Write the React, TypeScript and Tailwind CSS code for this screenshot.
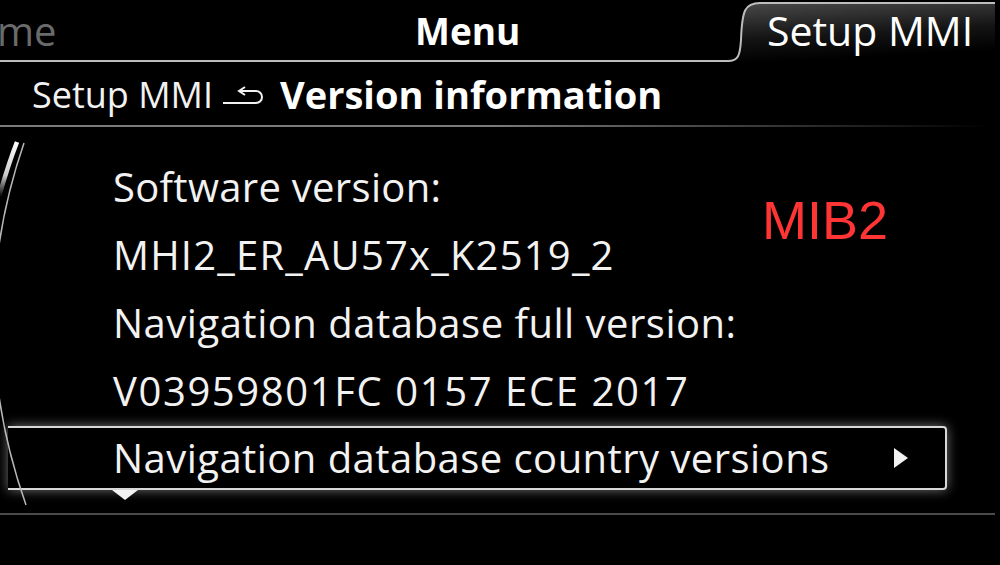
import React from 'react';

const rows = [
  { text: 'Software version:', track: 'tracking-[0.3px]' },
  { text: 'MHI2_ER_AU57x_K2519_2', track: 'tracking-[1.2px]' },
  { text: 'Navigation database full version:', track: 'tracking-[0.5px]' },
  { text: 'V03959801FC 0157 ECE 2017', track: 'tracking-[1.6px]' },
];

const font = { fontFamily: '"Open Sans", "Noto Sans", sans-serif' };

const TabOutline = () => (
  <svg className="absolute inset-0 h-full w-full" viewBox="0 0 1000 62" preserveAspectRatio="none">
    <defs>
      <linearGradient id="tabFill" x1="0" y1="0" x2="0.25" y2="1">
        <stop offset="0" stopColor="#4a4a4a" />
        <stop offset="0.6" stopColor="#141414" />
        <stop offset="1" stopColor="#000" />
      </linearGradient>
    </defs>
    <path d="M728 61 C738 61 740 56 741 40 C742 10 745 3 760 3 L995 3 L995 61 Z" fill="url(#tabFill)" />
    <path d="M0 61 L728 61 C738 61 740 56 741 40 C742 10 745 3 760 3 L995 3" fill="none" stroke="#bdbdbd" strokeWidth="2" />
  </svg>
);

const BackArrow = () => (
  <svg width="42" height="20" viewBox="0 0 42 20" className="ml-[9px] mr-[16px] mt-[2px]">
    <path d="M1 17 H34 a6 6 0 0 0 0 -12 H18" fill="none" stroke="#f2f2f2" strokeWidth="2" />
    <path d="M23 1 L17 5 L23 9" fill="none" stroke="#f2f2f2" strokeWidth="2" />
  </svg>
);

const SideArcs = () => (
  <svg className="pointer-events-none absolute left-0 top-0" width="40" height="400" viewBox="0 0 40 400">
    <defs>
      <linearGradient id="brightArc" x1="0" y1="0" x2="0" y2="1">
        <stop offset="0" stopColor="#ffffff" />
        <stop offset="0.6" stopColor="#ffffff" stopOpacity="0.8" />
        <stop offset="1" stopColor="#ffffff" stopOpacity="0" />
      </linearGradient>
    </defs>
    <path d="M17 15 Q8 38 -1 70" fill="none" stroke="url(#brightArc)" strokeWidth="4.5" />
    <path d="M24 16 Q-38 196 26 378" fill="none" stroke="#b8b8b8" strokeWidth="1.5" />
  </svg>
);

export default function App() {
  return (
    <div className="relative h-[565px] w-[1000px] overflow-hidden bg-black text-[#f2f2f2]" style={font}>
      <div className="relative flex h-[62px] items-center">
        <TabOutline />
        <span className="relative w-[415px] -translate-x-[3px] whitespace-nowrap text-[40px] text-[#6a6a6a]">me</span>
        <span className="relative w-[352px] text-[37px] font-bold text-white">Menu</span>
        <span className="relative text-[41px] text-white">Setup MMI</span>
      </div>

      <div className="relative flex h-[65px] items-center pl-[32px]">
        <span className="text-[36px]">Setup MMI</span>
        <BackArrow />
        <span className="text-[38px] font-bold text-white">Version information</span>
        <div className="absolute bottom-0 left-0 h-[2px] w-[990px] bg-gradient-to-r from-[#7a7a7a] via-[#7a7a7a] to-transparent" />
      </div>

      <div className="relative pt-[26px]">
        {rows.map((r) => (
          <div key={r.text} className={`flex h-[68px] items-center pl-[113px] text-[40px] ${r.track}`}>
            {r.text}
          </div>
        ))}
        <div className="relative ml-[8px] mr-[53px] mt-[1px] flex h-[64px] items-center justify-between rounded-r-[4px] border-2 border-l-0 border-[#d8d8d8] bg-black pl-[105px] pr-[36px] text-[40px] tracking-[0.45px] shadow-[0_0_12px_rgba(255,255,255,0.45)]">
          <span>Navigation database country versions</span>
          <svg width="16" height="22" viewBox="0 0 16 22">
            <path d="M1 1 L15 11 L1 21 Z" fill="#f2f2f2" />
          </svg>
        </div>
        <div className="ml-[112px] h-0 w-0 border-x-[13px] border-t-[10px] border-x-transparent border-t-[#f2f2f2]" />
        <div className="mt-[13px] h-[2px] w-[995px] bg-[#4a4a4a]" />
        <SideArcs />
      </div>

      <span
        className="absolute left-[762px] top-[193px] text-[54px] leading-none text-[#ff3535]"
        style={{ fontFamily: '"Liberation Sans", Arial, sans-serif' }}
      >
        MIB2
      </span>
    </div>
  );
}
